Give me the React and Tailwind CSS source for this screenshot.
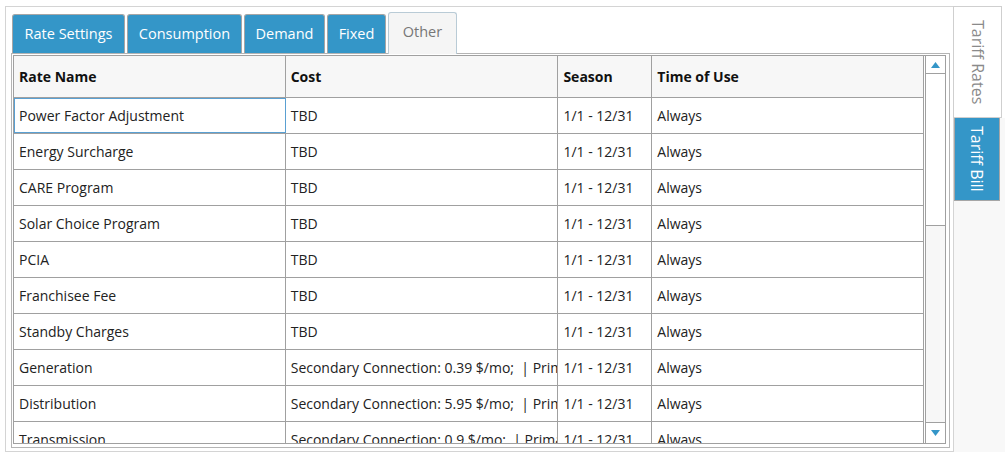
import React from 'react';

const tabs = [
  { label: 'Rate Settings', width: 'w-[113px]' },
  { label: 'Consumption', width: 'w-[115px]' },
  { label: 'Demand', width: 'w-[81px]' },
  { label: 'Fixed', width: 'w-[59px]' },
];

const rows = [
  { name: 'Power Factor Adjustment', cost: 'TBD' },
  { name: 'Energy Surcharge', cost: 'TBD' },
  { name: 'CARE Program', cost: 'TBD' },
  { name: 'Solar Choice Program', cost: 'TBD' },
  { name: 'PCIA', cost: 'TBD' },
  { name: 'Franchisee Fee', cost: 'TBD' },
  { name: 'Standby Charges', cost: 'TBD' },
  { name: 'Generation', cost: 'Secondary Connection: 0.39 $/mo;  | Primary Connection: 0.37 $/mo' },
  { name: 'Distribution', cost: 'Secondary Connection: 5.95 $/mo;  | Primary Connection: 4.12 $/mo' },
  { name: 'Transmission', cost: 'Secondary Connection: 0.9 $/mo;  | Primary Connection: 0.88 $/mo' },
];

const Arrow = ({ down }) => (
  <svg width="9" height="6" viewBox="0 0 9 6" className={down ? 'rotate-180' : ''}>
    <path d="M4.5 0 L9 6 L0 6 Z" fill="#3496c8" />
  </svg>
);

export default function App() {
  return (
    <div className="flex h-[452px] w-[1005px] overflow-hidden bg-white font-['Open_Sans',sans-serif] text-[14px] text-[#222]">
      {/* main panel */}
      <div className="ml-[5px] mt-[6px] flex h-[446px] w-[949px] flex-col border border-[#d4d4d4] pl-[5px] pr-[3px] pb-[3px]">
        <div className="flex h-[47px] items-end pl-[1px]">
          {tabs.map((t) => (
            <div
              key={t.label}
              className={`mr-[2px] flex h-[39px] ${t.width} items-center justify-center rounded-t-[3px] border border-b-0 border-[#a6a6a6] bg-[#3496c8] text-[14.5px] text-white`}
            >
              {t.label}
            </div>
          ))}
          <div className="relative top-[1px] flex h-[42px] w-[69px] items-center justify-center rounded-t-[3px] border border-b-0 border-[#b9cbd6] bg-[#f5f5f5] pb-[4px] text-[14.5px] text-[#777]">
            Other
          </div>
        </div>
        <div className="flex-1 border border-[#b4b4b4] pl-[1px] pt-[1px] pr-[3px] pb-[3px]">
          <div className="flex h-[389px] w-[933px] border border-[#a0a0a0]">
            <div className="flex w-[911px] flex-col overflow-hidden">
              <div className="flex h-[42px] shrink-0 border-b border-[#a0a0a0] bg-[#f7f7f7] font-bold text-[#111]">
                <div className="flex w-[272px] items-center border-r border-[#a0a0a0] pl-[5px]">Rate Name</div>
                <div className="flex w-[273px] items-center border-r border-[#a0a0a0] pl-[5px]">Cost</div>
                <div className="flex w-[94px] items-center border-r border-[#a0a0a0] pl-[5px]">Season</div>
                <div className="flex w-[272px] items-center border-r border-[#a0a0a0] pl-[5px]">Time of Use</div>
              </div>
              {rows.map((r, i) => (
                <div key={r.name} className="flex h-[36px] shrink-0 border-b border-[#a0a0a0]">
                  <div
                    className={`flex w-[272px] items-center border-r border-[#a0a0a0] pl-[5px] ${
                      i === 0 ? 'outline outline-1 -outline-offset-1 outline-[#5aa0d2]' : ''
                    }`}
                  >
                    {r.name}
                  </div>
                  <div className="flex w-[273px] items-center overflow-hidden whitespace-pre border-r border-[#a0a0a0] pl-[5px]">
                    {r.cost}
                  </div>
                  <div className="flex w-[94px] items-center border-r border-[#a0a0a0] pl-[5px]">1/1 - 12/31</div>
                  <div className="flex w-[272px] items-center border-r border-[#a0a0a0] pl-[5px]">Always</div>
                </div>
              ))}
            </div>
            {/* scrollbar */}
            <div className="ml-[1px] flex w-[20px] flex-col border-l border-[#a0a0a0] bg-[#f7f7f7]">
              <div className="flex h-[18px] items-center justify-center border-b border-[#a0a0a0] bg-white">
                <Arrow />
              </div>
              <div className="h-[152px] border-b border-[#a0a0a0] bg-white" />
              <div className="flex-1" />
              <div className="flex h-[21px] items-center justify-center border-t border-[#a0a0a0] bg-white">
                <Arrow down />
              </div>
            </div>
          </div>
        </div>
      </div>
      {/* side tabs */}
      <div className="mt-[6px] flex flex-1 flex-col">
        <div className="-ml-[1px] flex h-[112px] w-[49px] items-center justify-center border border-[#cfcfcf] bg-white text-[16px] text-[#8a8a8a] [writing-mode:vertical-rl]">
          Tariff Rates
        </div>
        <div className="flex flex-1 flex-col bg-[#f8f8f8]">
          <div className="flex h-[83px] w-[46px] items-center justify-center border border-t-0 border-[#a6a6a6] bg-[#3496c8] text-[16px] text-white [writing-mode:vertical-rl]">
            Tariff Bill
          </div>
        </div>
      </div>
    </div>
  );
}
